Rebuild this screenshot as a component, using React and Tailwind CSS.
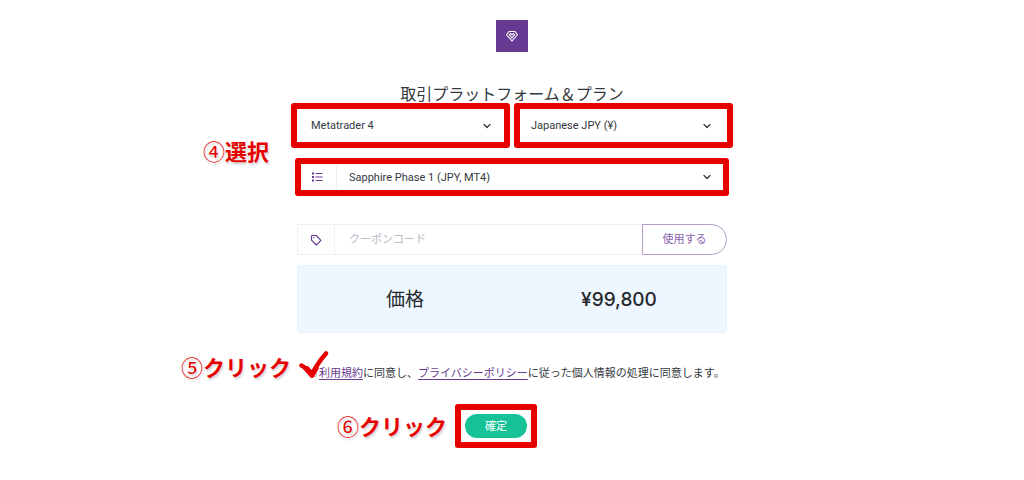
import { useState } from 'react'
import { ChevronDown } from 'lucide-react'

const frameBase = 'pointer-events-none absolute z-10 rounded-[3px] border-6 border-[#e60000]'

const stepBase =
  "pointer-events-none absolute right-full z-10 whitespace-nowrap font-['Noto_Sans_CJK_JP',sans-serif] text-[22px] leading-7 font-bold text-[#e60000] [text-shadow:0_0_2px_#fff,1px_2px_2px_#ccc]"

function Step({ number, children, className }) {
  return (
    <span className={`${stepBase} ${className}`}>
      <span className="font-normal">{number}</span>
      {children}
    </span>
  )
}

function SelectField({ label, value, onChange, options, className = '' }) {
  return (
    <div className="relative flex h-full min-w-0 flex-1 items-center">
      <select
        aria-label={label}
        value={value}
        onChange={(event) => onChange(event.target.value)}
        className={`h-full w-full appearance-none bg-transparent pt-0.5 pr-8 font-['Roboto','Noto_Sans_CJK_JP',sans-serif] text-[11px] text-[#33383d] outline-none ${className}`}
      >
        {options.map((option) => (
          <option key={option}>{option}</option>
        ))}
      </select>
      <ChevronDown className="pointer-events-none absolute right-3.5 size-3 text-[#33383d]" strokeWidth={2.5} />
    </div>
  )
}

function GemIcon() {
  return (
    <svg viewBox="0 0 24 24" className="size-3" fill="none" stroke="currentColor" strokeWidth="2.2" strokeLinejoin="round">
      <path d="M6 3h12l5 6.500L12 22 1 9.500z" />
      <path d="M6.500 9.500 9.500 7l2.500 3 2.500-3 3 2.500L12 16z" />
    </svg>
  )
}

function ListIcon() {
  return (
    <svg viewBox="0 0 12 12" className="size-3 text-[#663a92]" fill="none" stroke="currentColor">
      <path d="M1 2.500h2M1 6h2M1 9.500h2" strokeWidth="2" />
      <path d="M4.500 2.500h7M4.500 6h7M4.500 9.500h7" strokeWidth="1" />
    </svg>
  )
}

function TagIcon() {
  return (
    <svg viewBox="0 0 12 12" className="size-3 text-[#663a92]" fill="none" stroke="currentColor" strokeWidth="1.2" strokeLinejoin="round">
      <path d="M1.500 2.200q0-.7.7-.7h4l4.300 4.300q.5.500 0 1L6.800 10.500q-.5.500-1 0L1.500 6.200z" />
      <circle cx="3.700" cy="3.700" r=".6" fill="currentColor" stroke="none" />
    </svg>
  )
}

export default function App() {
  const [platform, setPlatform] = useState('Metatrader 4')
  const [currency, setCurrency] = useState('Japanese JPY (¥)')
  const [plan, setPlan] = useState('Sapphire Phase 1 (JPY, MT4)')
  const [coupon, setCoupon] = useState('')
  const [agreed, setAgreed] = useState(false)

  return (
    <main className="bg-white px-4 pt-5 pb-10 font-['Inter','Noto_Sans_CJK_JP',sans-serif] text-[#33383d]">
      <form className="mx-auto w-full max-w-[430px]" onSubmit={(event) => event.preventDefault()}>
        <div className="mx-auto flex size-8 items-center justify-center bg-[#663a92] text-white">
          <GemIcon />
        </div>
        <h1 className="mt-[30px] text-center text-base leading-6 font-normal">取引プラットフォーム＆プラン</h1>

        <div className="relative mt-1 grid grid-cols-2 gap-2.5">
          <Step number="④" className="top-[26px] mr-7">選択</Step>
          <div className="relative h-[31px]">
            <SelectField
              label="プラットフォーム"
              value={platform}
              onChange={setPlatform}
              options={['Metatrader 4', 'Metatrader 5']}
              className="pl-3.5"
            />
            <span className={`${frameBase} -inset-y-[7px] -right-[3px] -left-1.5`} />
          </div>
          <div className="relative h-[31px]">
            <SelectField
              label="通貨"
              value={currency}
              onChange={setCurrency}
              options={['Japanese JPY (¥)', 'US Dollar ($)']}
              className="pl-3.5"
            />
            <span className={`${frameBase} -inset-y-[7px] -right-1.5 -left-[3px]`} />
          </div>
        </div>

        <div className="relative mt-5 flex h-8 items-center">
          <div className="flex h-full w-10 shrink-0 items-center justify-center border-r border-[#eeeff2]">
            <ListIcon />
          </div>
          <SelectField
            label="プラン"
            value={plan}
            onChange={setPlan}
            options={['Sapphire Phase 1 (JPY, MT4)', 'Ruby Phase 1 (JPY, MT4)']}
            className="pl-3"
          />
          <span className={`${frameBase} -inset-x-0.5 -inset-y-[3px]`} />
        </div>

        <div className="mt-[31px] flex h-[31px]">
          <div className="flex w-[38px] shrink-0 items-center justify-center border border-[#eeeff2]">
            <TagIcon />
          </div>
          <input
            type="text"
            aria-label="クーポンコード"
            placeholder="クーポンコード"
            value={coupon}
            onChange={(event) => setCoupon(event.target.value)}
            className="min-w-0 flex-1 border-y border-[#eeeff2] px-3.5 text-[11px] outline-none placeholder:text-[#b8bcc4]"
          />
          <button
            type="button"
            className="w-[85px] shrink-0 rounded-r-full border border-[#b59ccb] text-[11px] text-[#8862aa]"
          >
            使用する
          </button>
        </div>

        <div className="mt-2.5 grid h-[68px] grid-cols-2 items-center rounded-[3px] border border-[#e8f2fa] bg-[#eef7ff] pt-0.5 text-center text-[19px] text-[#25292d]">
          <span>価格</span>
          <span className="font-medium">¥99,800</span>
        </div>

        <div className="relative mt-[30px] flex h-5 items-center pl-3 text-[11px] leading-5 whitespace-nowrap">
          <Step number="⑤" className="-top-[11px] mr-1.5">クリック</Step>
          <input
            id="agree"
            type="checkbox"
            checked={agreed}
            onChange={(event) => setAgreed(event.target.checked)}
            className="mr-0.5 size-2 appearance-none rounded-[1px] border border-[#c9c9ce] checked:bg-[#663a92]"
          />
          <svg
            viewBox="0 0 30 28"
            className="pointer-events-none absolute -top-3 left-0.5 z-10 h-7 w-[30px]"
            fill="none"
            stroke="#e60000"
            strokeLinecap="round"
            strokeLinejoin="round"
          >
            <path d="M2.500 14.500C6 16 9 20 13 24.500C16 17 22 8 27 2.500" strokeWidth="4.5" />
            <path d="M8 18l5 6 4-7" strokeWidth="5.5" />
          </svg>
          <label htmlFor="agree">
            <a href="#terms" className="text-[#663a92] underline underline-offset-2">利用規約</a>
            に同意し、
            <a href="#privacy" className="text-[#663a92] underline underline-offset-2">プライバシーポリシー</a>
            に従った個人情報の処理に同意します。
          </label>
        </div>

        <div className="mt-[31px] flex justify-center pr-8">
          <div className="relative">
            <Step number="⑥" className="-top-[3px] mr-[18px]">クリック</Step>
            <button type="submit" className="block h-6 w-[62px] rounded-full bg-[#18c297] text-[11px] text-white">
              確定
            </button>
            <span className={`${frameBase} -inset-x-2.5 -inset-y-2.5`} />
          </div>
        </div>
      </form>
    </main>
  )
}
